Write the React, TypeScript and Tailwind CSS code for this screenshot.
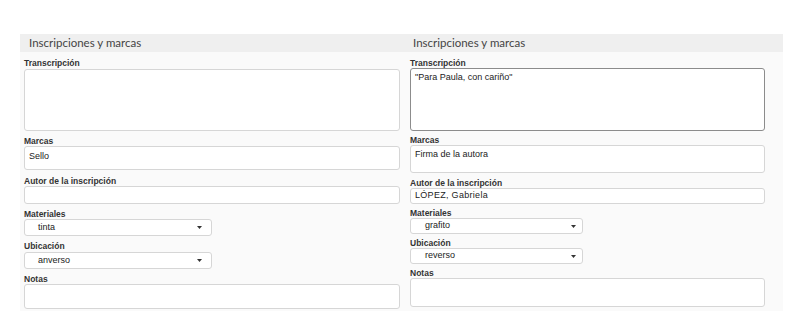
import type { ReactNode } from "react";

const labelCls = "block h-[10px] text-[8.5px] font-bold leading-[10px] text-[#333]";
const boxCls = "rounded-[3px] border border-[#d6d6d6] bg-white px-[4px] text-[9px] text-[#222]";

function Label({ children, className = "" }: { children: ReactNode; className?: string }) {
  return <span className={`${labelCls} ${className}`}>{children}</span>;
}

function Caret() {
  return (
    <svg width="5" height="3" viewBox="0 0 5 3" aria-hidden="true">
      <path d="M0 0H5L2.5 3Z" fill="#333" />
    </svg>
  );
}

function Select({ value, className }: { value: string; className: string }) {
  return (
    <div className={`flex items-center justify-between rounded-[3px] border border-[#d6d6d6] bg-white text-[9px] text-[#222] ${className}`}>
      <span>{value}</span>
      <Caret />
    </div>
  );
}

export default function App() {
  return (
    <div className="min-h-[325px] bg-white pt-[34px] pl-[20px]" style={{ fontFamily: '"Liberation Sans", Arial, sans-serif' }}>
      <div className="w-[763px] bg-[#fafafa]">
        <div className="flex h-[18px] items-center bg-[#efefef] text-[11.5px] text-[#444]" style={{ fontFamily: "Lato, sans-serif" }}>
          <div className="w-[384px] pl-[9px]">Inscripciones y marcas</div>
          <div className="pl-[9px]">Inscripciones y marcas</div>
        </div>

        <div className="flex pb-[2px]">
          {/* left column */}
          <div className="flex w-[384px] flex-col pl-[4px] pr-[4px] pt-[6px]">
            <Label>Transcripción</Label>
            <div className={`${boxCls} mt-[1px] h-[62px]`} />
            <Label className="mt-[5px]">Marcas</Label>
            <div className={`${boxCls} h-[24px] pt-[3px] leading-[12px]`}>Sello</div>
            <Label className="mt-[6px]">Autor de la inscripción</Label>
            <div className={`${boxCls} h-[18px]`} />
            <Label className="mt-[5px]">Materiales</Label>
            <Select value="tinta" className="h-[17px] w-[188px] pl-[13px] pr-[9px]" />
            <Label className="mt-[5px]">Ubicación</Label>
            <Select value="anverso" className="mt-[1px] h-[17px] w-[188px] pl-[13px] pr-[9px]" />
            <Label className="mt-[5px]">Notas</Label>
            <div className={`${boxCls} h-[25px]`} />
          </div>

          {/* right column */}
          <div className="flex flex-1 flex-col pl-[6px] pr-[18px] pt-[6px]">
            <Label>Transcripción</Label>
            <div className="h-[63px] rounded-[3px] border border-[#8c8c8c] bg-white px-[4px] pt-[2px] text-[9px] leading-[12px] text-[#222]">
              "Para Paula, con cariño"
            </div>
            <Label className="mt-[4px]">Marcas</Label>
            <div className={`${boxCls} h-[28px] pt-[2px] leading-[12px]`}>Firma de la autora</div>
            <Label className="mt-[5px]">Autor de la inscripción</Label>
            <div className={`${boxCls} flex h-[16px] items-center tracking-[0.3px]`}>LÓPEZ, Gabriela</div>
            <Label className="mt-[4px]">Materiales</Label>
            <Select value="grafito" className="h-[16px] w-[173px] pl-[14px] pr-[6px]" />
            <Label className="mt-[4px]">Ubicación</Label>
            <Select value="reverso" className="h-[16px] w-[173px] pl-[14px] pr-[6px]" />
            <Label className="mt-[4px]">Notas</Label>
            <div className={`${boxCls} h-[29px]`} />
          </div>
        </div>
      </div>
    </div>
  );
}
